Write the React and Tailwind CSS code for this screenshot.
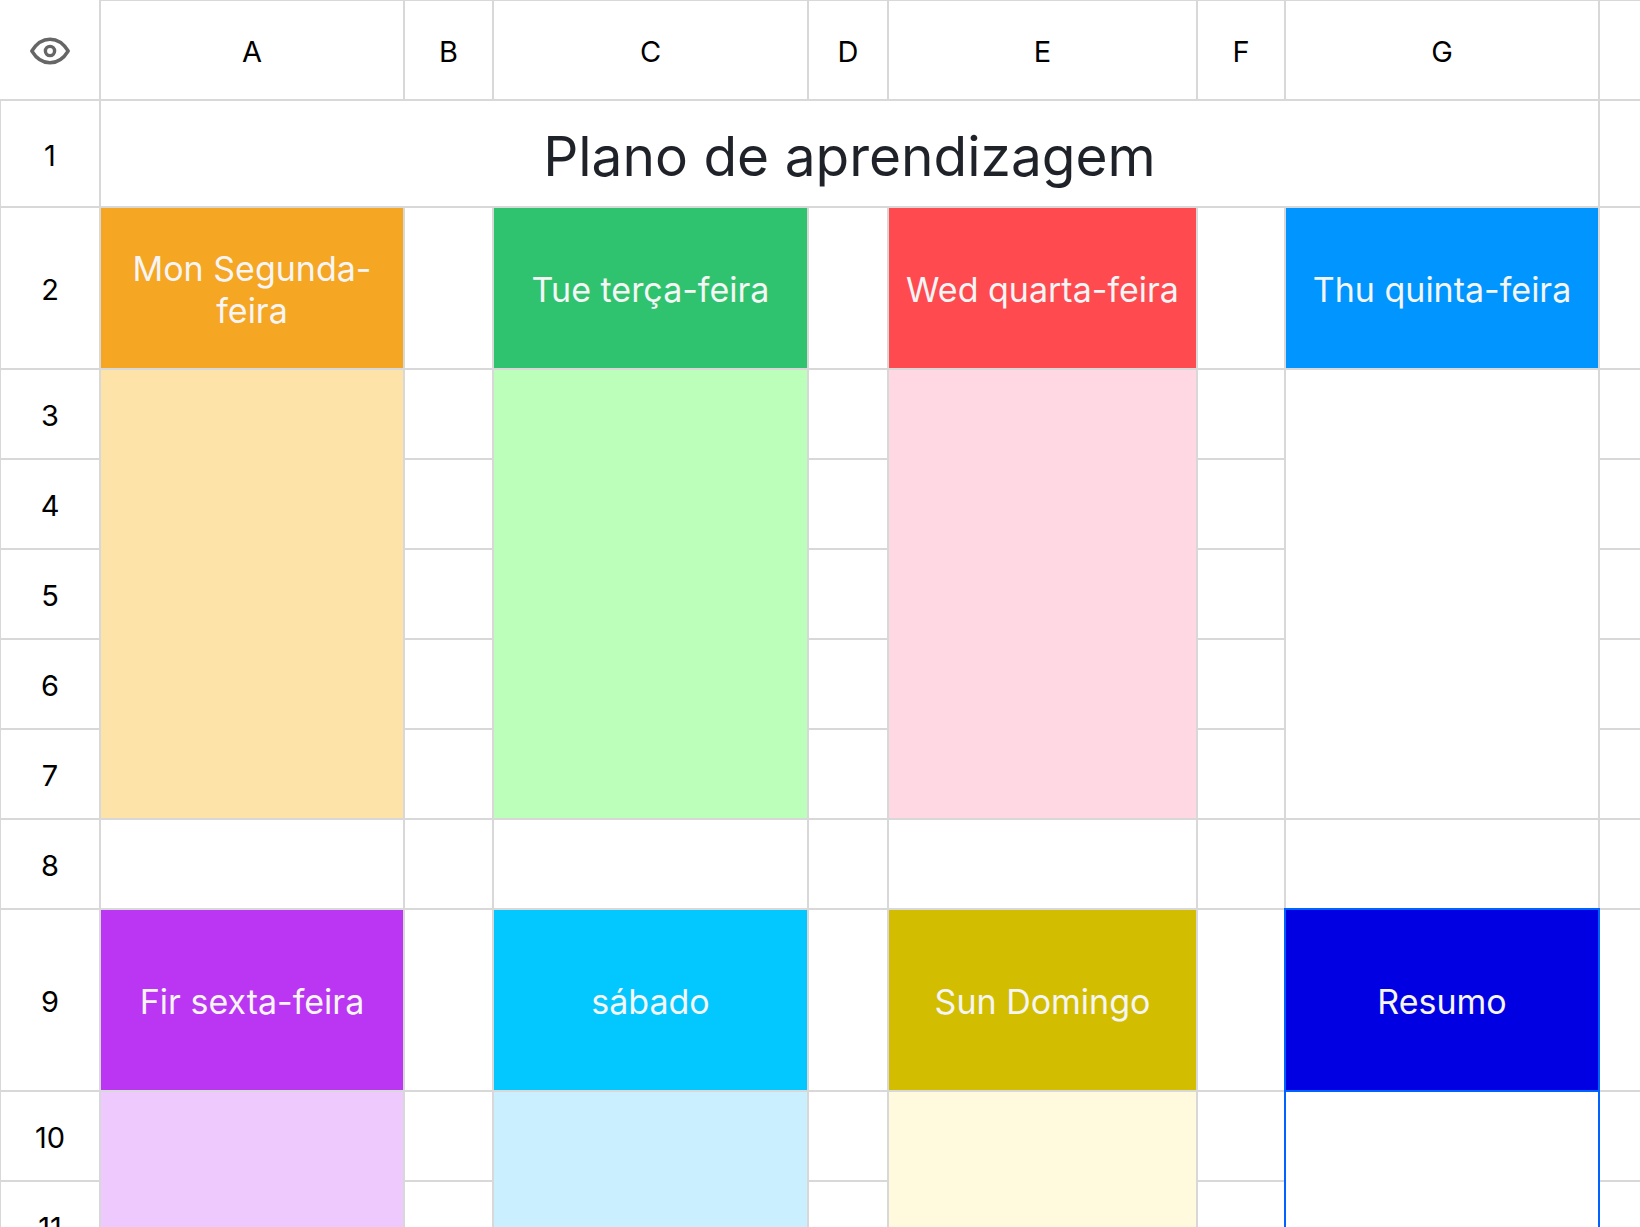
import clsx from 'clsx';

const columns = [
    { label: 'A', width: 'w-[304px]' },
    { label: 'B', width: 'w-[89px]' },
    { label: 'C', width: 'w-[315px]' },
    { label: 'D', width: 'w-[80px]' },
    { label: 'E', width: 'w-[309px]' },
    { label: 'F', width: 'w-[88px]' },
    { label: 'G', width: 'w-[314px]' },
];

const firstWeek = [
    { title: 'Mon Segunda-feira', head: 'bg-[#f5a623]', body: 'bg-[#fee3a8]' },
    { title: 'Tue terça-feira', head: 'bg-[#2fc36f]', body: 'bg-[#bbffbb]' },
    { title: 'Wed quarta-feira', head: 'bg-[#ff4a50]', body: 'bg-[#ffd8e3]' },
    { title: 'Thu quinta-feira', head: 'bg-[#0095ff]', body: 'bg-white' },
];

const secondWeek = [
    { title: 'Fir sexta-feira', head: 'bg-[#bb36f2]', body: 'bg-[#edc9fd]' },
    { title: 'sábado', head: 'bg-[#02c8ff]', body: 'bg-[#caf0ff]' },
    { title: 'Sun Domingo', head: 'bg-[#d3bd00]', body: 'bg-[#fffadd]' },
    { title: 'Resumo', head: 'bg-[#0000e3]', body: 'bg-white', selected: true },
];

const line = 'border-b-2 border-[#d8d8d8]';

const EyeIcon = () => (
    <svg className="w-10 h-7" viewBox="0 0 40 28" fill="none" stroke="#666666" strokeWidth="3.4" strokeLinejoin="round">
        <path d="M1.8 14C6.5 6.3 12.5 2.2 20 2.2s13.5 4.1 18.2 11.8C33.5 21.7 27.5 25.8 20 25.8S6.5 21.7 1.8 14z" />
        <circle cx="20" cy="14" r="4.6" />
    </svg>
);

// Blue outline drawn on top of the grid lines around a cell
const SelectionOutline = () => (
    <span className="absolute -inset-0.5 border-2 border-[#0062ff] pointer-events-none" />
);

const Cell = ({ className, selected, last, children, ...props }) => (
    <td
        className={clsx(line, !last && 'border-r-2', 'pt-1 text-center align-middle', selected && 'relative', className)}
        {...props}
    >
        {children}
        {selected && <SelectionOutline />}
    </td>
);

const RowHeader = ({ number }) => (
    <th scope="row" className={clsx(line, 'border-r-2 border-l pt-1 text-center align-middle font-normal')}>
        {number}
    </th>
);

const Row = ({ number, height = 'h-[90px]', children }) => (
    <tr className={height}>
        <RowHeader number={number} />
        {children}
        <Cell last />
    </tr>
);

// Narrow spacer columns B, D and F sit between the day columns
const DayHeads = ({ days }) =>
    days.map((day, index) => [
        <Cell
            key={day.title}
            selected={day.selected}
            className={clsx(day.head, 'px-3 text-[34px] leading-[42px] text-[#f5f5f5]')}
        >
            {day.title}
        </Cell>,
        index < days.length - 1 && <Cell key={`${day.title}-gap`} />,
    ]);

const DayBodies = ({ days, rows }) =>
    days.map((day, index) => [
        <Cell key={day.title} selected={day.selected} rowSpan={rows} className={day.body} />,
        index < days.length - 1 && <Cell key={`${day.title}-gap`} />,
    ]);

const Spacers = () => [0, 1, 2].map((n) => <Cell key={n} />);

const App = () => {
    return (
        <main className="h-screen overflow-hidden bg-white text-black font-['Inter','Liberation_Sans',sans-serif]">
            <table className="w-full table-fixed border-separate border-spacing-0 text-[29px] leading-9">
                <colgroup>
                    <col className="w-[101px]" />
                    {columns.map((column) => (
                        <col key={column.label} className={column.width} />
                    ))}
                    <col />
                </colgroup>
                <thead>
                    <tr className="h-[101px]">
                        <td className={clsx(line, 'border-r-2 pt-0.5')}>
                            <button type="button" aria-label="Mostrar" className="flex w-full items-center justify-center">
                                <EyeIcon />
                            </button>
                        </td>
                        {columns.map((column) => (
                            <th
                                key={column.label}
                                scope="col"
                                className={clsx(line, 'border-t border-r-2 pt-1 align-middle font-normal')}
                            >
                                {column.label}
                            </th>
                        ))}
                        <td className={clsx(line, 'border-t')} />
                    </tr>
                </thead>
                <tbody>
                    <Row number={1} height="h-[107px]">
                        <Cell colSpan={7} className="text-[55px] leading-[72px] text-[#1f2329]">
                            Plano de aprendizagem
                        </Cell>
                    </Row>
                    <Row number={2} height="h-[162px]">
                        <DayHeads days={firstWeek} />
                    </Row>
                    <Row number={3}>
                        <DayBodies days={firstWeek} rows={5} />
                    </Row>
                    {[4, 5, 6, 7].map((number) => (
                        <Row key={number} number={number}>
                            <Spacers />
                        </Row>
                    ))}
                    <Row number={8}>
                        {columns.map((column) => (
                            <Cell key={column.label} />
                        ))}
                    </Row>
                    <Row number={9} height="h-[182px]">
                        <DayHeads days={secondWeek} />
                    </Row>
                    <Row number={10}>
                        <DayBodies days={secondWeek} rows={2} />
                    </Row>
                    <Row number={11}>
                        <Spacers />
                    </Row>
                </tbody>
            </table>
        </main>
    );
};

export default App;
